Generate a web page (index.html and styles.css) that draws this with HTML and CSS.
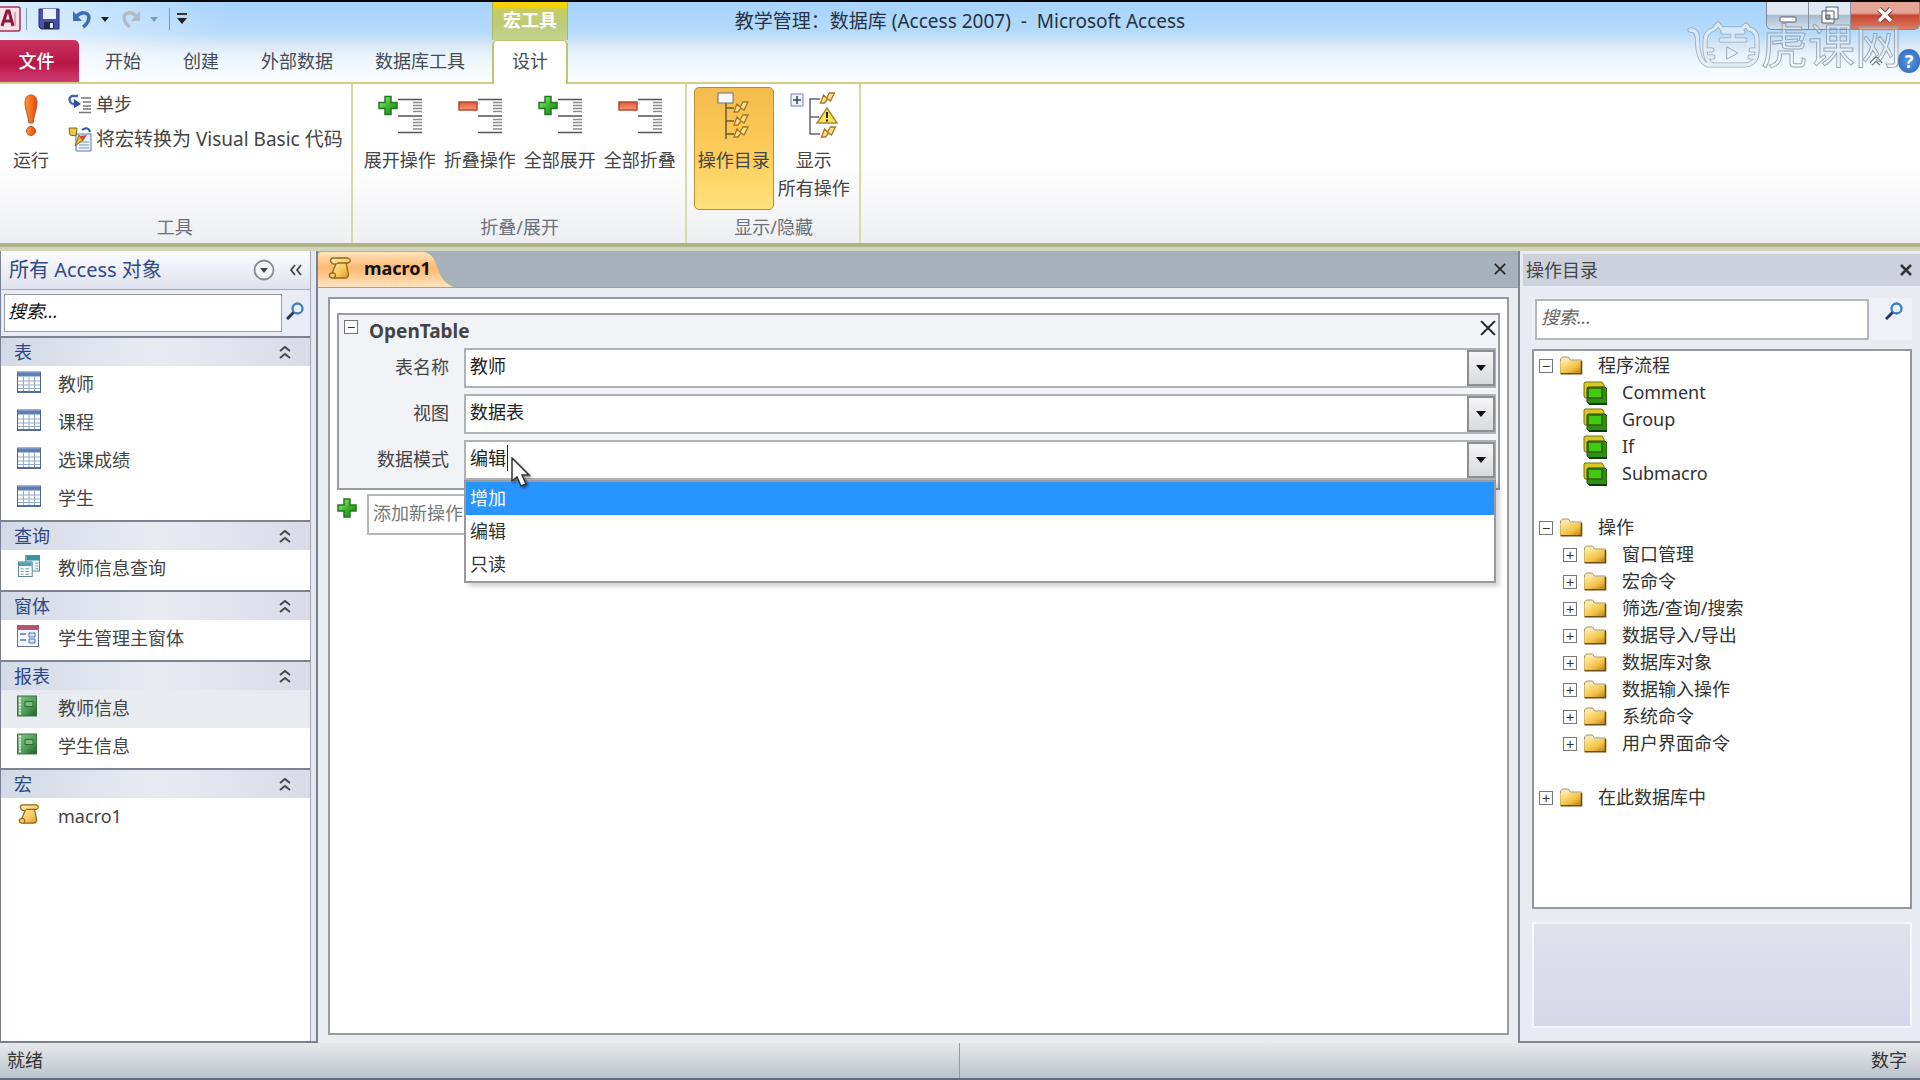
FILE: index.html
```html
<!DOCTYPE html>
<html lang="zh-CN">
<head>
<meta charset="utf-8">
<meta name="viewport" content="width=device-width, initial-scale=1">
<title>教学管理 - Microsoft Access</title>
<link rel="stylesheet" href="styles.css">
</head>
<body>
<svg class="defs" aria-hidden="true">
  <defs>
    <linearGradient id="gPlus" x1="0" y1="0" x2="1" y2="1"><stop offset="0" stop-color="#b6ec8a"/><stop offset=".5" stop-color="#3fb52e"/><stop offset="1" stop-color="#1d7d1a"/></linearGradient>
    <linearGradient id="gMinus" x1="0" y1="0" x2="0" y2="1"><stop offset="0" stop-color="#d9593a"/><stop offset="1" stop-color="#f99a7c"/></linearGradient>
    <linearGradient id="gRun" x1="0" y1="0" x2="1" y2="0"><stop offset="0" stop-color="#ff9a3d"/><stop offset=".5" stop-color="#f7701f"/><stop offset="1" stop-color="#d9480c"/></linearGradient>
    <linearGradient id="gFolder" x1="0" y1="0" x2="1" y2="1"><stop offset="0" stop-color="#fff0a0"/><stop offset=".6" stop-color="#f3bf45"/><stop offset="1" stop-color="#b77a14"/></linearGradient>
    <linearGradient id="gScroll" x1="0" y1="0" x2="1" y2="1"><stop offset="0" stop-color="#fff0b4"/><stop offset=".6" stop-color="#f6cb62"/><stop offset="1" stop-color="#d98f28"/></linearGradient>
    <linearGradient id="gGreen" x1="0" y1="0" x2="1" y2="1"><stop offset="0" stop-color="#8fc490"/><stop offset=".6" stop-color="#4d9a55"/><stop offset="1" stop-color="#1d5c2a"/></linearGradient>
  </defs>
  <symbol id="plus" viewBox="0 0 20 20"><path d="M7 1h6v6h6v6h-6v6H7v-6H1V7h6z" fill="url(#gPlus)" stroke="#1f7a25" stroke-width="1.5"/></symbol>
  <symbol id="lines" viewBox="0 0 24 36"><path d="M0 1.500h24M0 18h24M0 34.500h24" stroke="#555" stroke-width="1.500"/><path d="M15 4.500h9M15 7.500h9M15 10.500h9M15 13.500h9M15 21.500h9M15 24.500h9M15 27.500h9M15 31h9" stroke="#8b8b8b" stroke-width="1.500"/></symbol>
  <symbol id="expand" viewBox="0 0 44 48"><use href="#plus" x="0" y="3" width="20" height="21"/><use href="#lines" x="20" y="6" width="24" height="36"/></symbol>
  <symbol id="collapse" viewBox="0 0 44 48"><rect x="1" y="10" width="18" height="8" fill="url(#gMinus)" stroke="#b5472c" stroke-width="1.500"/><use href="#lines" x="20" y="6" width="24" height="36"/></symbol>
  <symbol id="bolt" viewBox="0 0 16 12"><path d="M1 11 4 3l3 3 3-5h5l-4 8-3-2-3 4z" fill="#fbe08a" stroke="#a87722" stroke-width="1.300"/></symbol>
  <symbol id="scroll" viewBox="0 0 24 24"><path d="M4 2h16c3 1 3 4 0 5h-2l2 9c1 4 0 6-3 6H4c-4-1-3-5 0-5l4-9C3 9 1 4 4 2z" fill="url(#gScroll)" stroke="#94661a" stroke-width="1.300"/><path d="M18 7H9M4 17h2c2 1 2 4 0 5" fill="none" stroke="#94661a" stroke-width="1.300"/></symbol>
  <symbol id="table" viewBox="0 0 24 21"><rect x=".5" y=".5" width="23" height="20" fill="#fff" stroke="#4d6593"/><path d="M1 1h22v4H1z" fill="#5b7fb9"/><path d="M1 9.500h22M1 13.500h22M1 17h22M6.500 5v15M12 5v15M17.500 5v15" stroke="#94a9cc"/><path d="M0 20.500h24" stroke="#3d5689" stroke-width="1.500"/></symbol>
  <symbol id="query" viewBox="0 0 24 24"><rect x="8.500" y=".5" width="15" height="17" fill="#eef6fb" stroke="#5a7a96"/><path d="M9 1h14v5H9z" fill="#3d929f"/><path d="M19 9h3M19 12h3M19 15h3" stroke="#7590a8"/><rect x=".5" y="7.500" width="15" height="16" fill="#f8fbff" stroke="#5a7a96"/><path d="M1 8h14v4H1z" fill="#4ba3ad"/><path d="M3 15h3M8 15h4M3 18h3M8 18h4M3 21h3M8 21h4" stroke="#7590a8"/></symbol>
  <symbol id="form" viewBox="0 0 24 22"><rect x=".5" y=".5" width="21" height="21" fill="#f4f6ff" stroke="#65759e"/><path d="M0 0h22v5H0z" fill="#b9556c"/><path d="M3 9h6M3 15h6" stroke="#5970ae" stroke-width="1.500"/><path d="M12 8h6v4h-6zM12 14h6v4h-6z" fill="#dbe3ff" stroke="#5970ae"/></symbol>
  <symbol id="report" viewBox="0 0 24 21"><rect x=".5" y=".5" width="19" height="20" fill="url(#gGreen)" stroke="#3b7044"/><path d="M3 2v18" stroke="#e3f1e0" stroke-width="2" stroke-dasharray="2 1"/><path d="M8 6h8v5H8z" fill="#7fbb7e" stroke="#2d6a38"/></symbol>
  <symbol id="folder" viewBox="0 0 23 19"><path d="M1 17V3l2-2h6l2 3h11v13z" fill="#f5e6b4" stroke="#a89560"/><path d="M1 5h21v12.500H1z" fill="url(#gFolder)"/><path d="M1 17.800h21V5" fill="none" stroke="#6f4d12" stroke-width="1.600"/></symbol>
  <symbol id="block" viewBox="0 0 24 24"><path d="M2 1h17l2 3v13H2l-1-2V2z" fill="#d9c91d" stroke="#7d7414"/><path d="M5 6h17l2 2v15H6l-2-2V7z" fill="#2f8f12" stroke="#1c4f0c"/><path d="M5 7h14v10H5z" fill="#3fcb12" stroke="#355d0b" stroke-width="1.600"/><path d="M6 23h18" stroke="#12390a" stroke-width="2"/></symbol>
  <symbol id="lens" viewBox="0 0 18 18"><circle cx="11.500" cy="6.500" r="5" fill="#e7f3fd" stroke="#3f7fb8" stroke-width="2.300"/><path d="M7.500 10.500 1 17" stroke="#1d3a66" stroke-width="3"/></symbol>
  <symbol id="chev" viewBox="0 0 12 14"><path d="m1 6 5-4 5 4M1 13l5-4 5 4" fill="none" stroke="#444" stroke-width="1.800"/></symbol>
  <symbol id="cross" viewBox="0 0 14 14"><path d="m1 1 12 12M13 1 1 13" stroke="currentColor" stroke-width="1.800"/></symbol>
  <symbol id="down" viewBox="0 0 10 6"><path d="M0 0h10L5 6z" fill="currentColor"/></symbol>
</svg>

<header class="chrome">
  <div class="titlebar">
    <div class="title-left">
      <div class="qat">
        <svg class="app-icon" viewBox="0 0 21 26"><rect x="-4" y="1" width="24" height="24" rx="2" fill="#f8e2ea" stroke="#a53358" stroke-width="1.500"/><path d="m2 20 5-15h2l4 15M4 15h7" fill="none" stroke="#8c1a3d" stroke-width="3"/><path d="M15 6v14" stroke="#e3a5ba" stroke-width="2"/></svg>
        <span class="bar"></span>
        <button class="icon-btn" aria-label="保存"><svg width="22" height="22" viewBox="0 0 22 22"><path d="M1 1h20v20H3l-2-2z" fill="#4650ae" stroke="#262c7c"/><path d="M5 1h13v10H5z" fill="#eaf3fc"/><path d="M6 14h10v7H6z" fill="#1f2a45"/><path d="M12 15h3v5h-3z" fill="#dfe6f4"/></svg></button>
        <button class="icon-btn undo" aria-label="撤消"><svg width="20" height="20" viewBox="0 0 20 20"><path d="M4 8c5-6 12-5 13 0 0 5-3 8-6 10" fill="none" stroke="#3a6db5" stroke-width="3.500"/><path d="M1 2v10h9z" fill="#3a6db5"/></svg></button>
        <button class="icon-btn arrow" aria-label="撤消列表"><svg width="8" height="5"><use href="#down"/></svg></button>
        <button class="icon-btn redo" aria-label="重做"><svg width="20" height="20" viewBox="0 0 20 20"><path d="M16 8C11 2 4 3 3 8c0 5 3 8 6 10" fill="none" stroke="#b4bbc4" stroke-width="3.500"/><path d="M19 2v10h-9z" fill="#b4bbc4"/></svg></button>
        <button class="icon-btn arrow dim" aria-label="重做列表"><svg width="8" height="5"><use href="#down"/></svg></button>
        <span class="bar"></span>
        <button class="icon-btn more" aria-label="自定义快速访问工具栏"><svg width="10" height="12" viewBox="0 0 10 12"><path d="M0 1h10" stroke="#333" stroke-width="2"/><path d="M0 5h10l-5 6z" fill="#222"/></svg></button>
      </div>
      <div class="context-label">宏工具</div>
    </div>
    <h1 class="window-title">教学管理<span class="colon">：</span>数据库 (Access 2007)&nbsp; -&nbsp; Microsoft Access</h1>
    <div class="window-buttons">
      <button class="win" aria-label="最小化"><svg width="18" height="26" viewBox="0 0 18 26"><rect x="1" y="15" width="16" height="5" rx="1" fill="#fff" stroke="#555f6e"/></svg></button>
      <button class="win" aria-label="还原"><svg width="18" height="26" viewBox="0 0 18 26"><path d="M5 5h12v12H5zM1 9h12v12H1z" fill="#fff" stroke="#555f6e"/><path d="M5 13h4v4H5z" fill="#9aa9bb" stroke="#555f6e"/></svg></button>
      <button class="win close" aria-label="关闭"><svg width="18" height="26" viewBox="0 0 18 26"><path d="m3 7 12 12M15 7 3 19" stroke="#7d4038" stroke-width="5.500"/><path d="m3 7 12 12M15 7 3 19" stroke="#fff" stroke-width="3.500"/></svg></button>
    </div>
  </div>
  <nav class="tabs" aria-label="功能区">
    <button class="tab file">文件</button>
    <button class="tab">开始</button>
    <button class="tab">创建</button>
    <button class="tab">外部数据</button>
    <button class="tab">数据库工具</button>
    <button class="tab active">设计</button>
    <div class="tab-tools">
      <button class="icon-btn" aria-label="折叠功能区"><svg width="14" height="12" viewBox="0 0 14 12"><path d="m2 9 5-5 5 5" fill="none" stroke="#66707c" stroke-width="4.500"/><path d="m2 9 5-5 5 5" fill="none" stroke="#fff" stroke-width="2"/></svg></button>
      <button class="help" aria-label="帮助">?</button>
    </div>
  </nav>
  <div class="watermark" aria-hidden="true">
    <svg width="74" height="50" viewBox="0 0 74 50"><g fill="none" stroke-linecap="round" stroke-linejoin="round"><g stroke="#8d9cad" stroke-width="5"><path d="M3 10c9 0 7 8 8 18 1 8 3 15 10 17h36c8 0 13-5 13-13V20c0-6-3-10-8-11l-3-4-4 4H35l-4-5-4 5c-6 2-9 6-9 12v8c0 8 2 13 8 16"/><path d="M36 12h20M34 20h24M46 10v10M20 30h5M20 37h6M64 30h6M63 37h6"/></g><g stroke="#dfecf7" stroke-width="3.400"><path d="M3 10c9 0 7 8 8 18 1 8 3 15 10 17h36c8 0 13-5 13-13V20c0-6-3-10-8-11l-3-4-4 4H35l-4-5-4 5c-6 2-9 6-9 12v8c0 8 2 13 8 16"/><path d="M36 12h20M34 20h24M46 10v10M20 30h5M20 37h6M64 30h6M63 37h6"/></g><path d="m40 27 11 6-11 6z" stroke="#8d9cad"/></g></svg>
    <span class="watermark-text">虎课网</span>
  </div>
</header>

<section class="ribbon" aria-label="设计">
  <div class="group">
    <div class="group-body tools">
      <button class="big run"><svg class="glyph" width="16" height="48" viewBox="0 0 16 48"><path d="M8 3c4 0 6 3 6 8 0 6-3 12-4 20H6C5 23 2 17 2 11c0-5 2-8 6-8z" fill="url(#gRun)" stroke="#b5552a"/><circle cx="8" cy="39" r="4.500" fill="url(#gRun)" stroke="#b5552a"/></svg><span>运行</span></button>
      <div class="smalls">
        <button class="small"><svg width="24" height="20" viewBox="0 0 24 20"><path d="M10 2H4C0 4 1 10 7 10" fill="none" stroke="#3f66b5" stroke-width="2.500"/><path d="m6 5 7 5-7 4z" fill="#2b4f9e"/><path d="M13 4h10M15 8h8M15 12h8M15 15h8M11 18.500h12" stroke="#777" stroke-width="1.500"/></svg>单步</button>
        <button class="small convert"><svg width="24" height="26" viewBox="0 0 24 26"><path d="M8 8h15v17H8z" fill="#eef4fd" stroke="#5674ad"/><path d="M11 16h10M11 19h10M11 22h10" stroke="#7b93bd"/><path d="M1 2h8l-1 8-6-1z" fill="#e9c84f" stroke="#826619"/><path d="m7 20 4-11 4 5z" fill="#e7bd3a" stroke="#8a6a18"/><path d="m11 10 8-1-4 6z" fill="#d8432d"/><path d="M14 4c4-3 7-2 8 2" fill="none" stroke="#34558f" stroke-width="2"/></svg>将宏转换为 Visual Basic 代码</button>
      </div>
    </div>
    <div class="group-label">工具</div>
  </div>
  <div class="group narrow">
    <div class="group-body">
      <button class="big"><svg class="glyph" width="44" height="48"><use href="#expand"/></svg><span>展开操作</span></button>
      <button class="big"><svg class="glyph" width="44" height="48"><use href="#collapse"/></svg><span>折叠操作</span></button>
      <button class="big"><svg class="glyph" width="44" height="48"><use href="#expand"/></svg><span>全部展开</span></button>
      <button class="big"><svg class="glyph" width="44" height="48"><use href="#collapse"/></svg><span>全部折叠</span></button>
    </div>
    <div class="group-label">折叠/展开</div>
  </div>
  <div class="group narrow">
    <div class="group-body">
      <button class="big pressed" aria-pressed="true"><svg class="glyph" width="34" height="48" viewBox="0 0 34 48"><path d="M9 10v37M9 16h8M9 29h8M9 42h8" fill="none" stroke="#6b5a33" stroke-width="1.500"/><rect x="1" y="1" width="15" height="10" fill="#f6f8fc" stroke="#6b6f7d"/><use href="#bolt" x="16" y="9" width="16" height="12"/><use href="#bolt" x="16" y="22" width="16" height="12"/><use href="#bolt" x="16" y="34" width="16" height="12"/></svg><span>操作目录</span></button>
      <button class="big"><svg class="glyph" width="48" height="48" viewBox="0 0 48 48"><path d="M1 2h12v12H1z" fill="#eef2fb" stroke="#7280a0"/><path d="M7 4v8M3 8h8" stroke="#35435f" stroke-width="1.500"/><path d="M30 7H20v35h10M20 25h9" fill="none" stroke="#666" stroke-width="1.500"/><use href="#bolt" x="29" y="0" width="17" height="12"/><path d="m37 16 10 15H27z" fill="#fbe05a" stroke="#a58a28" stroke-width="1.500"/><path d="M37 20v6M37 27.500v2" stroke="#222" stroke-width="2"/><use href="#bolt" x="30" y="34" width="17" height="12"/></svg><span>显示<br>所有操作</span></button>
    </div>
    <div class="group-label">显示/隐藏</div>
  </div>
</section>

<main class="workspace">
  <aside class="nav-pane">
    <div class="nav-head">
      <h2>所有 Access 对象</h2>
      <button class="icon-btn" aria-label="筛选"><svg width="22" height="22" viewBox="0 0 22 22"><circle cx="11" cy="11" r="9.500" fill="#f3f4f7" stroke="#888c94" stroke-width="1.800"/><path d="M7 9h8l-4 5z" fill="#444"/></svg></button>
      <button class="icon-btn" aria-label="收起窗格"><svg width="14" height="12" viewBox="0 0 14 12"><path d="M6 1 2 6l4 5M12 1 8 6l4 5" fill="none" stroke="#444" stroke-width="1.800"/></svg></button>
    </div>
    <div class="nav-search">
      <input type="text" placeholder="搜索..." aria-label="搜索对象">
      <button class="icon-btn" aria-label="搜索"><svg width="18" height="18"><use href="#lens"/></svg></button>
    </div>
    <section class="nav-group">
      <button class="nav-title">表<svg width="12" height="14"><use href="#chev"/></svg></button>
      <a class="nav-item" href="#"><svg><use href="#table"/></svg>教师</a>
      <a class="nav-item" href="#"><svg><use href="#table"/></svg>课程</a>
      <a class="nav-item" href="#"><svg><use href="#table"/></svg>选课成绩</a>
      <a class="nav-item" href="#"><svg><use href="#table"/></svg>学生</a>
    </section>
    <section class="nav-group">
      <button class="nav-title">查询<svg width="12" height="14"><use href="#chev"/></svg></button>
      <a class="nav-item" href="#"><svg><use href="#query"/></svg>教师信息查询</a>
    </section>
    <section class="nav-group">
      <button class="nav-title">窗体<svg width="12" height="14"><use href="#chev"/></svg></button>
      <a class="nav-item" href="#"><svg><use href="#form"/></svg>学生管理主窗体</a>
    </section>
    <section class="nav-group">
      <button class="nav-title">报表<svg width="12" height="14"><use href="#chev"/></svg></button>
      <a class="nav-item hover" href="#"><svg><use href="#report"/></svg>教师信息</a>
      <a class="nav-item" href="#"><svg><use href="#report"/></svg>学生信息</a>
    </section>
    <section class="nav-group">
      <button class="nav-title">宏<svg width="12" height="14"><use href="#chev"/></svg></button>
      <a class="nav-item" href="#"><svg><use href="#scroll"/></svg>macro1</a>
    </section>
  </aside>

  <section class="document">
    <div class="doc-tabs">
      <button class="doc-tab"><svg class="tab-shape" viewBox="0 0 136 36" preserveAspectRatio="none"><defs><linearGradient id="gTab" x1="0" y1="0" x2="0" y2="1"><stop offset="0" stop-color="#ffe3bd"/><stop offset=".45" stop-color="#ffb970"/><stop offset=".6" stop-color="#ffc383"/><stop offset="1" stop-color="#ffe4c4"/></linearGradient></defs><path d="M0 36V5q0-4 4-4h100q10 0 14 12 6 20 18 23z" fill="url(#gTab)"/></svg><svg width="24" height="24"><use href="#scroll"/></svg><span>macro1</span></button>
      <button class="icon-btn" aria-label="关闭标签"><svg width="12" height="12"><use href="#cross"/></svg></button>
    </div>
    <div class="doc-body">
      <div class="action">
        <div class="action-head">
          <button class="toggle" aria-label="折叠">−</button>
          <h3>OpenTable</h3>
          <button class="icon-btn" aria-label="删除"><svg width="16" height="16"><use href="#cross"/></svg></button>
        </div>
        <div class="field">
          <label for="f-table">表名称</label>
          <div class="combo"><select id="f-table"><option>教师</option></select><span class="drop"><svg width="10" height="6"><use href="#down"/></svg></span></div>
        </div>
        <div class="field">
          <label for="f-view">视图</label>
          <div class="combo"><select id="f-view"><option>数据表</option></select><span class="drop"><svg width="10" height="6"><use href="#down"/></svg></span></div>
        </div>
        <div class="field">
          <label for="f-mode">数据模式</label>
          <div class="combo">
            <input id="f-mode" type="text" role="combobox" aria-expanded="true" aria-controls="mode-list" value="编辑"><button class="drop" aria-label="展开列表"><svg width="10" height="6"><use href="#down"/></svg></button>
            <span class="caret"></span>
            <ul class="list" id="mode-list" role="listbox">
              <li role="option" aria-selected="true">增加</li>
              <li role="option">编辑</li>
              <li role="option">只读</li>
            </ul>
            <svg class="pointer" viewBox="0 0 20 30"><path d="M1 1v23l5-4 4 9 5-2-4-9h7z" fill="#fff" stroke="#333" stroke-width="1.500"/></svg>
          </div>
        </div>
      </div>
      <div class="add-row">
        <svg width="20" height="22"><use href="#plus"/></svg>
        <select aria-label="添加新操作"><option>添加新操作</option></select>
      </div>
    </div>
  </section>

  <aside class="catalog">
    <div class="catalog-head"><h2>操作目录</h2><button class="icon-btn" aria-label="关闭操作目录"><svg width="12" height="12" viewBox="0 0 12 12"><path d="m1 1 10 10M11 1 1 11" stroke="#333" stroke-width="2.500"/></svg></button></div>
    <div class="catalog-search">
      <input type="text" placeholder="搜索..." aria-label="搜索操作">
      <button class="icon-btn" aria-label="搜索"><svg width="18" height="18"><use href="#lens"/></svg></button>
    </div>
    <ul class="tree">
      <li><div class="node"><button class="toggle" aria-label="折叠">−</button><svg><use href="#folder"/></svg>程序流程</div>
        <ul>
          <li><div class="node leaf"><svg><use href="#block"/></svg>Comment</div></li>
          <li><div class="node leaf"><svg><use href="#block"/></svg>Group</div></li>
          <li><div class="node leaf"><svg><use href="#block"/></svg>If</div></li>
          <li><div class="node leaf"><svg><use href="#block"/></svg>Submacro</div></li>
        </ul>
      </li>
      <li><div class="node"><button class="toggle" aria-label="折叠">−</button><svg><use href="#folder"/></svg>操作</div>
        <ul>
          <li><div class="node"><button class="toggle" aria-label="展开">+</button><svg><use href="#folder"/></svg>窗口管理</div></li>
          <li><div class="node"><button class="toggle" aria-label="展开">+</button><svg><use href="#folder"/></svg>宏命令</div></li>
          <li><div class="node"><button class="toggle" aria-label="展开">+</button><svg><use href="#folder"/></svg>筛选/查询/搜索</div></li>
          <li><div class="node"><button class="toggle" aria-label="展开">+</button><svg><use href="#folder"/></svg>数据导入/导出</div></li>
          <li><div class="node"><button class="toggle" aria-label="展开">+</button><svg><use href="#folder"/></svg>数据库对象</div></li>
          <li><div class="node"><button class="toggle" aria-label="展开">+</button><svg><use href="#folder"/></svg>数据输入操作</div></li>
          <li><div class="node"><button class="toggle" aria-label="展开">+</button><svg><use href="#folder"/></svg>系统命令</div></li>
          <li><div class="node"><button class="toggle" aria-label="展开">+</button><svg><use href="#folder"/></svg>用户界面命令</div></li>
        </ul>
      </li>
      <li><div class="node"><button class="toggle" aria-label="展开">+</button><svg><use href="#folder"/></svg>在此数据库中</div></li>
    </ul>
    <div class="help-box"></div>
  </aside>
</main>

<footer class="status"><span class="ready">就绪</span><span class="num">数字</span></footer>
</body>
</html>
```

FILE: styles.css
```css
* { box-sizing: border-box; }

body {
  margin: 0;
  min-height: 100vh;
  display: flex;
  flex-direction: column;
  background: #e9ecf0;
  color: #444;
  font: 18px/28px "Noto Sans", "Noto Sans CJK SC", sans-serif;
}

h1, h2, h3, ul { margin: 0; padding: 0; font-weight: 400; font-size: inherit; list-style: none; }
button, input, select { font: inherit; color: inherit; margin: 0; padding: 0; border: 0; background: none; border-radius: 0; outline: 0; }
select { appearance: none; }
a { color: inherit; text-decoration: none; }
svg { display: block; flex: none; }
.defs { position: absolute; width: 0; height: 0; }
.icon-btn { display: flex; align-items: center; justify-content: center; color: #222; }

/* Title bar and ribbon tabs */
.chrome {
  position: relative;
  border-top: 2px solid #05070a;
  background:
    linear-gradient(90deg, rgba(255, 255, 255, .6), rgba(255, 255, 255, 0) 12%),
    linear-gradient(#a5d3fd, #b6dbfb 38%, #d6e7f6 52%, #eaf4fd 66%, #fdfeff);
}
.titlebar { display: grid; height: 38px; }
.titlebar > * { grid-area: 1 / 1; }
.title-left { display: flex; }
.qat { width: 492px; display: flex; align-items: center; padding-bottom: 4px; }
.app-icon { width: 21px; height: 26px; }
.bar { width: 1px; height: 22px; margin: 0 11px 0 5px; background: #7d9ab8; }
.undo { margin-left: 12px; }
.redo { margin-left: 11px; }
.arrow { width: 10px; margin-left: 8px; }
.dim { color: #8a97a5; margin-right: 5px; }
.more { margin-left: -4px; }
.context-label {
  width: 76px;
  border: solid #a9b95a;
  border-width: 0 1px;
  background: linear-gradient(#f8d200 5px, #c9cd5f 7px, #bccb7c 60%, #c6d58e);
  color: #fff;
  font-weight: 700;
  line-height: 36px;
  text-align: center;
}
.window-title { justify-self: center; color: #26323f; font-size: 19px; line-height: 36px; z-index: 1; }
.colon { font-family: "Noto Sans CJK TC", sans-serif; }
.window-buttons { justify-self: end; align-self: start; display: flex; border: solid #7c8b9c; border-width: 0 1px 1px; border-radius: 0 0 6px 6px; overflow: hidden; }
.win { width: 42px; height: 27px; display: flex; justify-content: center; background: linear-gradient(#e0e9f3 45%, #a9bccf 50%, #d3e0eb); border-right: 1px solid #8593a3; }
.win.close { width: 68px; border: 0; background: linear-gradient(#e5a596 40%, #c5472f 50%, #dd7a5f); }

.tabs { display: flex; height: 44px; border-bottom: 2px solid #cfcf86; }
.tab { height: 42px; padding: 0 20px; margin-right: 2px; color: #444b55; }
.tab.file { width: 79px; margin-right: 6px; padding: 0 6px 0 0; border-radius: 0 5px 0 0; background: linear-gradient(#c93460, #b81645 55%, #d03b73); color: #fff; font-weight: 500; }
.tab.active { height: 44px; width: 76px; margin-left: 5px; padding: 0 0 4px; border: solid #bfc56c; border-width: 1px 2px 0; border-radius: 5px 5px 0 0; background: #fff; }
.tab-tools { margin-left: auto; display: flex; align-items: center; gap: 15px; }
.help { width: 22px; height: 24px; border-radius: 12px; background: radial-gradient(#5a97e0, #2a62b8); color: #fff; font-weight: 700; line-height: 24px; }
.watermark { position: absolute; top: 18px; right: 18px; display: flex; opacity: .85; pointer-events: none; }
.watermark-text { font-size: 47px; line-height: 50px; color: rgba(255, 255, 255, .25); -webkit-text-stroke: 1px #8d9cad; }

/* Ribbon */
.ribbon { display: flex; background: linear-gradient(#fff 50%, #eeeff2); border-bottom: 4px solid #b2b287; box-shadow: 0 4px 0 #d0d6bd; margin-bottom: 4px; }
.group { padding: 3px 8px 2px 7px; border-right: 2px solid #d6dba2; }
.group.narrow { padding: 3px 5px 2px 7px; }
.group-body { display: flex; height: 123px; }
.group-label { margin-top: 3px; text-align: center; color: #6c7078; }
.big { width: 80px; padding-top: 4px; border: 1px solid transparent; display: flex; flex-direction: column; align-items: center; gap: 6px; white-space: nowrap; }
.glyph { height: 48px; }
.pressed { border-color: #b68e35; border-radius: 5px; background: linear-gradient(#f3bb4b, #fdcd5c 55%, #ffe27b); }
.tools { gap: 7px; }
.run { width: 48px; }
.smalls { display: flex; flex-direction: column; gap: 6px; padding-top: 2px; }
.small { display: flex; align-items: center; gap: 4px; height: 29px; padding-left: 6px; white-space: nowrap; }
.convert { font-size: 19px; }

/* Workspace */
.workspace { flex: 1; display: flex; min-height: 0; }

.nav-pane { width: 318px; border: solid #7b8190; border-width: 0 2px 2px 1px; padding-right: 6px; background: linear-gradient(90deg, #fff 309px, #a2a7b3 309px, #a2a7b3 310px, #e4e8ef 310px); }
.nav-head { display: flex; align-items: center; gap: 14px; height: 39px; padding: 0 7px 0 8px; background: linear-gradient(#fdfdff, #dfe2ee); border-bottom: 1px solid #a7adbd; }
.nav-head h2 { flex: 1; font-size: 20px; color: #2f4a86; white-space: nowrap; }
.nav-search { display: flex; align-items: center; height: 46px; padding: 4px 6px 4px 3px; gap: 4px; background: #eaecf5; }
.nav-search input { flex: 1; min-width: 0; height: 38px; padding: 0 3px 5px; border: 1px solid #969cab; background: #fff; font-style: italic; }
.nav-search .icon-btn { margin-bottom: 4px; }
.nav-search input::placeholder { color: #111; opacity: 1; }
.nav-group { padding-bottom: 2px; }
.nav-title { display: flex; justify-content: space-between; align-items: center; width: 100%; height: 30px; padding: 0 19px 0 13px; border: solid #7e8391; border-width: 2px 0 0; background: linear-gradient(90deg, #d3d9e8, #e8ebf0 50%, #d9dce8); color: #2c4785; }
.nav-item { display: flex; align-items: center; gap: 17px; height: 38px; padding: 0 0 2px 16px; }
.nav-item svg { width: 24px; height: 22px; margin-bottom: 4px; }
.nav-item.hover { background: #e8ebf0; }

.document { flex: 1; min-width: 0; display: flex; flex-direction: column; padding: 0 0 8px; }
.doc-tabs { display: flex; justify-content: space-between; align-items: center; height: 37px; margin-bottom: 9px; padding-right: 12px; background: #a6b1bc; border-bottom: 1px solid #98a3af; }
.doc-tab { position: relative; display: flex; align-items: center; gap: 12px; width: 136px; height: 36px; padding: 0 0 2px 10px; color: #111; font-weight: 700; }
.tab-shape { position: absolute; inset: 0; width: 100%; height: 100%; }
.doc-tab > :not(.tab-shape) { position: relative; }
.doc-body { flex: 1; margin: 0 9px 0 10px; padding: 14px 7px; border: 2px solid #969ba2; background: #fff; }
.action { border: 2px solid #9a9ca1; background: #f2f3f6; padding: 0 2px 8px 5px; }
.action-head { display: flex; height: 33px; gap: 11px; }
.action-head h3 { flex: 1; font-size: 19px; font-weight: 700; line-height: 32px; }
.action-head .toggle { margin-top: 5px; }
.action-head .icon-btn { align-self: flex-start; height: 26px; }
.toggle { flex: none; width: 14px; height: 14px; border: 1px solid #777; background: #fff; font: 14px/12px "Liberation Sans", sans-serif; color: #333; }
.field { display: grid; grid-template-columns: 105px 1fr; column-gap: 15px; height: 40px; margin-bottom: 6px; text-align: right; }
.field:last-child { margin-bottom: 0; }
.field label { line-height: 39px; }
.combo { position: relative; display: flex; border: 2px solid #aeb1b5; background: #fff; text-align: left; }
.combo select, .combo input { flex: 1; min-width: 0; padding: 0 4px 4px; color: #222; }
.drop { width: 28px; border: 2px solid #8c8e92; background: linear-gradient(#f5f5f6, #d9dadd); display: flex; align-items: center; justify-content: center; color: #111; pointer-events: none; }
.combo .drop { margin-right: -1px; }
.caret { position: absolute; left: 41px; top: 3px; width: 1px; height: 26px; background: #222; }
.list { position: absolute; z-index: 2; top: 38px; left: -2px; right: -2px; border: 2px solid #989a9e; background: #fff; box-shadow: 4px 4px 4px rgba(0, 0, 0, .15); color: #333; }
.list li { height: 33px; padding-left: 4px; line-height: 33px; }
.list [aria-selected] { background: #2894ff; color: #fff; }
.pointer { position: absolute; z-index: 3; left: 45px; top: 15px; width: 20px; height: 30px; filter: drop-shadow(2px 2px 1px rgba(0, 0, 0, .4)); }
.add-row { display: flex; gap: 10px; margin-top: 4px; padding-right: 6px; }
.add-row svg { margin-top: 3px; }
.add-row select { flex: 1; height: 41px; padding: 0 4px 4px; border: 2px solid #b5b7ba; color: #777; }

.catalog { width: 402px; display: flex; flex-direction: column; padding: 3px 8px 13px 12px; border: solid #82868e; border-width: 0 0 2px 2px; background: #e8ebf1; }
.catalog-head { display: flex; justify-content: space-between; align-items: center; height: 32px; margin: 0 -8px 0 -9px; padding: 0 8px 0 3px; background: #ccd1dc; }
.catalog-search { display: flex; justify-content: space-between; margin: 12px 0 9px; padding: 1px 9px 0 3px; background: #eff1f6; }
.catalog-search input { width: 334px; height: 41px; padding: 0 4px 6px; border: 2px solid #b3b6bd; background: #fff; font-style: italic; }
.catalog-search .icon-btn { align-self: flex-start; height: 24px; }
.catalog-search input::placeholder { color: #666; opacity: 1; }
.tree { flex: 1; padding: 1px 0 0 5px; border: 2px solid #94979d; background: #fff; color: #333; line-height: 27px; }
.tree ul { padding: 0 0 27px 24px; }
.node { display: flex; align-items: center; height: 27px; }
.node svg { width: 24px; height: 19px; margin: 0 15px 0 6px; }
.leaf svg { height: 24px; margin-left: 20px; }
.help-box { height: 106px; margin-top: 13px; border: 2px solid #f5f7fb; background: linear-gradient(#dfe3e8, #dadde9 45%, #d5d7e8); }

/* Status bar */
.status { display: flex; justify-content: space-between; height: 37px; border: solid #5d6b7c; border-width: 0 0 2px; background: linear-gradient(#e6e9ec, #bcc3ca); color: #333; line-height: 34px; }
.ready { width: 50%; padding-left: 7px; border-right: 1px solid #949ca6; }
.num { padding-right: 13px; }
```
